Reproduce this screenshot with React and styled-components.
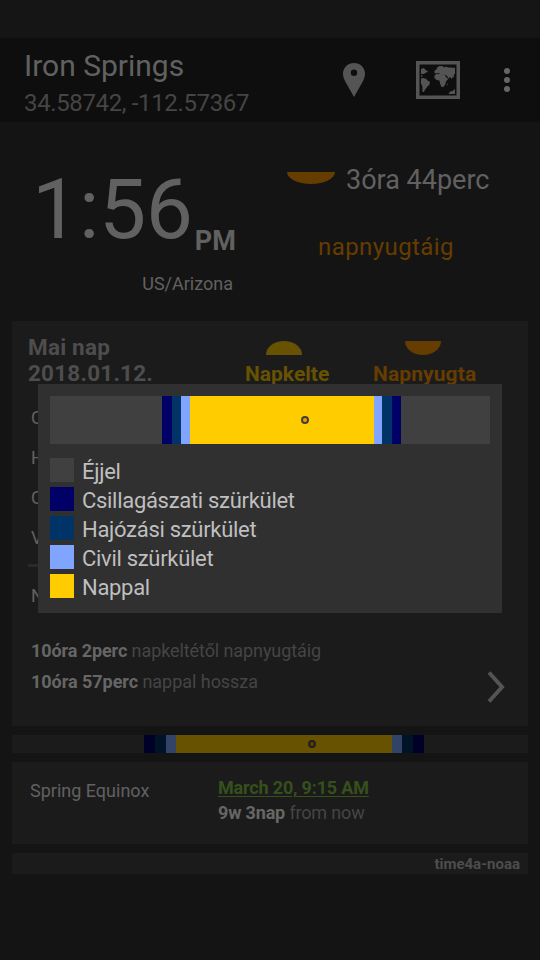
import React from "react";
import styled, { createGlobalStyle } from "styled-components";

const Global = createGlobalStyle`
  body { margin: 0; background: #141414; font-family: Roboto, "Noto Sans", sans-serif; }
  * { box-sizing: border-box; }
`;

const Screen = styled.main`
  position: relative;
  width: 540px;
  height: 960px;
  overflow: hidden;
  display: flex;
  flex-direction: column;
  background: #141414;
`;
const StatusBar = styled.div`
  height: 38px;
  flex: none;
  background: #151515;
`;
const ActionBar = styled.header`
  height: 84px;
  flex: none;
  display: flex;
  align-items: center;
  padding: 0 30px 0 24px;
  background: #0e0e0e;
`;
const Label = styled.div`
  flex: none;
  white-space: nowrap;
  font-size: ${(p) => p.$size}px;
  line-height: ${(p) => p.$line || p.$size}px;
  font-weight: ${(p) => (p.$bold ? 700 : 400)};
  color: ${(p) => p.$color || "#616161"};
  letter-spacing: ${(p) => p.$track || 0}px;
`;
const Place = styled.div`
  width: 319px;
  display: flex;
  flex-direction: column;
  gap: 5px;
  padding-top: 4px;
`;
const Actions = styled.div`
  display: flex;
  align-items: center;
  gap: 51px;
  svg { display: block; }
  svg:last-child { margin-left: -7px; }
`;
const Summary = styled.section`
  height: 199px;
  flex: none;
  display: grid;
  grid-template-columns: 270px 270px;
`;
const Clock = styled.div`
  display: flex;
  flex-direction: column;
  padding: 39px 0 0 32px;
`;
const Time = styled.div`
  display: flex;
  gap: 2px;
  height: 98px;
`;
const Meridiem = styled.div`
  padding-top: 64px;
`;
const Zone = styled.div`
  width: 201px;
  padding-top: 14px;
  display: flex;
  justify-content: flex-end;
`;
const Countdown = styled.div`
  display: flex;
  flex-direction: column;
  gap: 37px;
  padding-top: 42px;
`;
const CountdownRow = styled.div`
  height: 32px;
  display: flex;
  padding-left: 17px;
  gap: 11px;
  svg { margin-top: 8px; }
`;
const Caption = styled.div`
  padding-left: 48px;
`;
const Cards = styled.div`
  display: flex;
  flex-direction: column;
  gap: 9px;
  padding: 0 12px;
`;
const Card = styled.section`
  height: ${(p) => p.$height}px;
  background: #1b1b1b;
`;
const DayHeader = styled.div`
  height: 77px;
  display: flex;
  padding: 13px 0 0 16px;
`;
const DayTitle = styled.div`
  width: 217px;
`;
const SunColumn = styled.div`
  width: ${(p) => p.$width}px;
  display: flex;
  flex-direction: column;
  gap: 6px;
  padding-top: 7px;
  svg { margin-left: ${(p) => p.$indent}px; }
`;
const DayRows = styled.div`
  padding-left: 19px;
`;
const Rule = styled.hr`
  border: 0;
  height: 3px;
  margin: 6px 26px 12px 16px;
  background: #2a2a2a;
`;
const Lengths = styled.div`
  display: flex;
  justify-content: space-between;
  padding: 22px 22px 0 19px;
  svg { margin-top: 35px; }
`;
const Bold = styled.b`
  color: #666;
`;
const Bar = styled.div`
  position: relative;
  display: flex;
  height: ${(p) => p.$height}px;
`;
const Segment = styled.div`
  flex: ${(p) => p.$span} 0 0;
  background: ${(p) => p.$color};
`;
const NowMarker = styled.i`
  position: absolute;
  left: ${(p) => p.$at}px;
  top: 50%;
  width: 8px;
  height: 8px;
  margin: -4px 0 0 -4px;
  border-radius: 50%;
  border: 2px solid ${(p) => p.$ring};
  background: ${(p) => p.$fill};
`;
const Season = styled.div`
  display: flex;
  padding: 13px 18px;
`;
const SeasonName = styled.div`
  width: 188px;
  padding-top: 3px;
`;
const SeasonDate = styled.a`
  display: block;
  text-decoration: underline;
  text-underline-offset: 2px;
  text-decoration-thickness: 1px;
`;
const Source = styled.div`
  display: flex;
  justify-content: flex-end;
  padding: 0 8px;
`;
const Popup = styled.section`
  position: absolute;
  left: 38px;
  top: 384px;
  width: 464px;
  height: 229px;
  padding: 12px;
  background: #303030;
`;
const Legend = styled.ul`
  list-style: none;
  margin: 14px 0 0;
  padding: 0;
  display: grid;
  gap: 5px;
`;
const LegendItem = styled.li`
  display: flex;
  height: 24px;
  gap: 8px;
`;
const Swatch = styled.span`
  width: 24px;
  height: 24px;
  background: ${(p) => p.$color};
`;

const BRIGHT = { night: "#404040", astro: "#000066", nautical: "#003366", civil: "#80a5ff", day: "#ffcc00" };
const DIM = { night: "#1b1b1b", astro: "#000028", nautical: "#001428", civil: "#334267", day: "#665200" };
const PHASES = ["night", "astro", "nautical", "civil", "day", "civil", "nautical", "astro", "night"];

function DayBar({ height, spans, palette, now, ring, fill }) {
  return (
    <Bar $height={height}>
      {PHASES.map((phase, i) => <Segment key={i} $span={spans[i]} $color={palette[phase]} />)}
      <NowMarker $at={now} $ring={ring} $fill={fill} />
    </Bar>
  );
}

function PinIcon() {
  return (
    <svg width="22" height="34" viewBox="0 0 22 34">
      <path fill="#545454" fillRule="evenodd" d="M11 0C4.800 0 0 4.700 0 10.800c0 3.100 1.200 5.700 2.800 8.700L11 34l8.200-14.500c1.600-3 2.800-5.600 2.800-8.700C22 4.700 17.200 0 11 0Zm0 6.600a3.200 3.200 0 1 1 0 6.400 3.200 3.200 0 0 1 0-6.400Z" />
    </svg>
  );
}

function MapIcon() {
  return (
    <svg width="44" height="38" viewBox="0 0 44 38">
      <path fill="#545454" fillRule="evenodd" d="M0 0h44v38H0ZM3.500 3.500v31h37v-31Z" />
      <g fill="#545454">
        <path d="M5 8l1.500-.5L8 7l1 1.500 2 1.200 1 1.300-2 .5-2 1.500H5Z" />
        <path d="M5 14l1.500.5v1.200L5 15.500Z" />
        <path d="M5 17.500l2-.5 3 .8 1.500 1.700 2.500 1.200-.5 2.800-2 2-1.500 2-1 1-1 2.500H6.500L6.300 25 5 22.500Z" />
        <path d="M18.500 14.500l2-1.500 4-.3 4 1 1.500 2.300 2.200 2-2.200 2.500-.7 3-2 2.500h-1.800l-1.500-3.500-.5-3-3-.5-2-2Z" />
        <path d="M18.500 12V9.500l2-1 .5-2L23.500 5l3.500.3 1 1.200 2-.8 3 .8 6 .3v6l-1.200 1 .2 2.200-2 .8-.5 1.500-1.500-2.500-1.500 2-1.500-3-2-.8-4-.5-2.500-1.500-3 .5Z" />
        <path d="M30.800 23l1-1-.8 3.500Z" />
        <path d="M32.500 33l1.500-2.500 2.500-.5 2.500-2V33Z" />
      </g>
    </svg>
  );
}

function MenuIcon() {
  return (
    <svg width="6" height="26" viewBox="0 0 6 26" fill="#666">
      <circle cx="3" cy="4" r="3" />
      <circle cx="3" cy="13" r="3" />
      <circle cx="3" cy="22" r="3" />
    </svg>
  );
}

function HalfSun({ width, height, color, setting }) {
  const d = setting
    ? `M0 0H${width}A${width / 2} ${height} 0 0 1 0 0Z`
    : `M0 ${height}A${width / 2} ${height} 0 0 1 ${width} ${height}Z`;
  return <svg width={width} height={height}><path d={d} fill={color} /></svg>;
}

const LEGEND = [
  ["night", "Éjjel"],
  ["astro", "Csillagászati szürkület"],
  ["nautical", "Hajózási szürkület"],
  ["civil", "Civil szürkület"],
  ["day", "Nappal"],
];

export default function App() {
  return (
    <Screen>
      <Global />
      <StatusBar />
      <ActionBar>
        <Place>
          <Label $size={30} $line={36}>Iron Springs</Label>
          <Label $size={24} $line={28} $track={-0.36} $color="#454545">34.58742, -112.57367</Label>
        </Place>
        <Actions><PinIcon /><MapIcon /><MenuIcon /></Actions>
      </ActionBar>
      <Summary>
        <Clock>
          <Time>
            <Label $size={84} $line={98} $track={-0.3}>1:56</Label>
            <Meridiem><Label $size={27} $line={32} $bold>PM</Label></Meridiem>
          </Time>
          <Zone><Label $size={18} $line={22}>US/Arizona</Label></Zone>
        </Clock>
        <Countdown>
          <CountdownRow>
            <HalfSun width={48} height={12} color="#663d00" setting />
            <Label $size={27} $line={32}>3óra 44perc</Label>
          </CountdownRow>
          <Caption><Label $size={24} $line={28} $track={0.42} $color="#663d00">napnyugtáig</Label></Caption>
        </Countdown>
      </Summary>
      <Cards>
        <Card $height={405}>
          <DayHeader>
            <DayTitle>
              <Label $size={22.5} $line={26} $track={0.2} $bold $color="#4d4d4d">Mai nap</Label>
              <Label $size={22.5} $line={26} $track={0.2} $bold $color="#4d4d4d">2018.01.12.</Label>
            </DayTitle>
            <SunColumn $width={128} $indent={21}>
              <HalfSun width={36} height={14} color="#665200" />
              <Label $size={21} $line={26} $bold $color="#665200">Napkelte</Label>
            </SunColumn>
            <SunColumn $width={120} $indent={32}>
              <HalfSun width={36} height={14} color="#663d00" setting />
              <Label $size={21} $line={26} $track={0.1} $bold $color="#663d00">Napnyugta</Label>
            </SunColumn>
          </DayHeader>
          <DayRows>
            {["C", "H", "C", "V"].map((t, i) => <Label key={i} $size={18} $line={40}>{t}</Label>)}
          </DayRows>
          <Rule />
          <DayRows><Label $size={18} $line={34}>N</Label></DayRows>
          <Lengths>
            <div>
              <Label $size={18} $line={31} $track={-0.09} $color="#454545"><Bold>10óra 2perc</Bold> napkeltétől napnyugtáig</Label>
              <Label $size={18} $line={31} $track={-0.04} $color="#454545"><Bold>10óra 57perc</Bold> nappal hossza</Label>
            </div>
            <svg width="20" height="34" viewBox="0 0 20 34" fill="none" stroke="#545454" strokeWidth="4">
              <path d="M3 2.500L16 17 3 31.500" />
            </svg>
          </Lengths>
        </Card>
        <DayBar height={18} palette={DIM} spans={[132, 11, 11, 10, 216, 10, 11, 11, 104]} now={300} ring="#1f1f1f" fill="#663d00" />
        <Card $height={82}>
          <Season>
            <SeasonName><Label $size={18} $line={25}>Spring Equinox</Label></SeasonName>
            <div>
              <Label as={SeasonDate} $size={18} $line={25} $track={-0.17} $bold $color="#36501b">March 20, 9:15 AM</Label>
              <Label $size={18} $line={25} $track={-0.16} $color="#454545"><Bold>9w 3nap</Bold> from now</Label>
            </div>
          </Season>
        </Card>
        <Card $height={21}>
          <Source><Label $size={15} $line={22} $bold $color="#4d4d4d">time4a-noaa</Label></Source>
        </Card>
      </Cards>
      <Popup>
        <DayBar height={48} palette={BRIGHT} spans={[112, 10, 9, 9, 184, 8, 10, 9, 89]} now={255} ring="#404040" fill="#ff9900" />
        <Legend>
          {LEGEND.map(([phase, name]) => (
            <LegendItem key={phase}>
              <Swatch $color={BRIGHT[phase]} />
              <Label $size={22} $line={28} $track={-0.3} $color="#bfbfbf">{name}</Label>
            </LegendItem>
          ))}
        </Legend>
      </Popup>
    </Screen>
  );
}
